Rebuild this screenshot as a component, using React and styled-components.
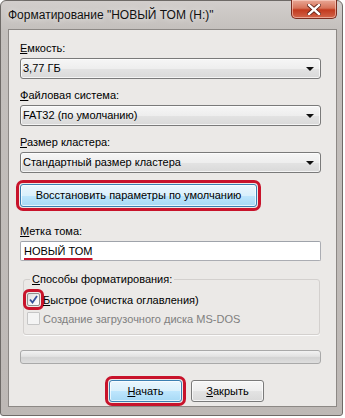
import React from "react";
import styled, { createGlobalStyle, css } from "styled-components";

const GlobalStyle = createGlobalStyle`
  html, body {
    margin: 0;
    padding: 0;
    background: #ffffff;
  }
  body {
    font-family: "Liberation Sans", Arial, sans-serif;
    font-size: 11px;
    color: #000;
  }
`;

const RED = "#c8132b";

const Window = styled.div`
  width: 343px;
  height: 416px;
  box-sizing: border-box;
  display: flex;
  flex-direction: column;
  padding: 0 5px 8px 7px;
  border: 1px solid #6e6a67;
  border-radius: 6px 6px 3px 3px;
  background: linear-gradient(180deg, #d2cecc 0px, #c3bfbc 30px, #bdb8b5 100%);
`;

const TitleBar = styled.div`
  height: 28px;
  display: flex;
  justify-content: space-between;
  align-items: flex-start;
`;

const Title = styled.div`
  padding-top: 6px;
  font-size: 12px;
  line-height: 17px;
  color: #111;
  white-space: nowrap;
  text-shadow: 0 0 6px rgba(255, 255, 255, 0.8);
`;

const CloseButton = styled.div`
  width: 46px;
  height: 19px;
  margin-top: -1px;
  box-sizing: border-box;
  border: 1px solid #7b2d20;
  border-top: none;
  border-radius: 0 0 5px 5px;
  background: linear-gradient(180deg, #e9a896 0%, #d7735a 45%, #c23a1e 55%, #d2654a 100%);
  box-shadow: inset 0 0 0 1px rgba(255, 220, 210, 0.55);
  display: flex;
  align-items: center;
  justify-content: center;
`;

const Body = styled.div`
  flex: 1;
  display: flex;
  flex-direction: column;
  border: 1px solid #8c8885;
  background: #ebe9e7;
  padding: 11px 15px 0 11px;
  white-space: nowrap;
`;

const Field = styled.div`
  display: flex;
  flex-direction: column;
  gap: 2px;
  margin-top: ${(p) => p.$mt || 0}px;
`;

const Label = styled.div`
  line-height: 15px;
  height: 15px;
`;

const controlFace = css`
  box-sizing: border-box;
  border: 1px solid #7a7a7a;
  border-radius: 3px;
  background: linear-gradient(180deg, #f6f6f6 0%, #eeeeee 50%, #e3e3e3 51%, #d9d9d9 100%);
  box-shadow: inset 0 0 0 1px rgba(255, 255, 255, 0.7);
`;

const Combo = styled.div`
  ${controlFace};
  height: 21px;
  display: flex;
  align-items: center;
  justify-content: space-between;
  padding: 0 6px 0 2px;
  line-height: 15px;
`;

const Arrow = styled.span`
  width: 0;
  height: 0;
  border-left: 4px solid transparent;
  border-right: 4px solid transparent;
  border-top: 4px solid #111;
`;

const Button = styled.div`
  ${controlFace};
  height: ${(p) => p.$h || 22}px;
  width: ${(p) => (p.$w ? `${p.$w}px` : "auto")};
  display: flex;
  align-items: center;
  justify-content: center;
  line-height: 15px;
  margin-top: ${(p) => p.$mt || 0}px;
  ${(p) =>
    p.$blue &&
    css`
      border-color: #3c7fb1;
      background: linear-gradient(180deg, #eaf6fd 0%, #d9f0fc 50%, #bee6fd 51%, #a7d9f5 100%);
    `}
  ${(p) =>
    p.$marked &&
    css`
      outline: 3px solid ${RED};
      outline-offset: 1px;
    `}
`;

const TextInput = styled.div`
  box-sizing: border-box;
  height: 20px;
  border: 1px solid #abadb3;
  border-top-color: #9fa3aa;
  border-radius: 2px;
  background: #fff;
  padding: 0 3px;
  display: flex;
  align-items: center;
  line-height: 15px;
`;

const MarkedText = styled.span`
  text-decoration: underline;
  text-decoration-color: ${RED};
  text-decoration-thickness: 2px;
  text-underline-offset: 3px;
`;

const Group = styled.fieldset`
  margin: ${(p) => p.$mt || 0}px 1px 0 3px;
  padding: 3px 3px 6px 3px;
  border: 1px solid #d3d0ce;
  border-radius: 3px;
  box-shadow: 0 1px 0 #fbfbfb;
`;

const Legend = styled.legend`
  margin-left: 3px;
  padding: 0 2px;
  line-height: 15px;
`;

const CheckRow = styled.div`
  height: 19px;
  display: flex;
  align-items: center;
  gap: 3px;
  color: ${(p) => (p.$disabled ? "#808080" : "#000")};
`;

const Box = styled.span`
  width: 13px;
  height: 13px;
  box-sizing: border-box;
  flex: none;
  border: 1px solid ${(p) => (p.$disabled ? "#c6c6c6" : "#8e8f8f")};
  border-radius: 1px;
  background: ${(p) =>
    p.$disabled
      ? "#f4f4f4"
      : "linear-gradient(135deg, #dcdcdc 0%, #f4f4f4 60%, #ffffff 100%)"};
  display: flex;
  align-items: center;
  justify-content: center;
  ${(p) =>
    p.$marked &&
    css`
      outline: 3px solid ${RED};
      outline-offset: 1px;
      border-radius: 2px;
    `}
`;

const Progress = styled.div`
  height: 14px;
  margin: ${(p) => p.$mt || 0}px 0 0 0;
  box-sizing: border-box;
  border: 1px solid #a9a9a9;
  border-radius: 3px;
  background: linear-gradient(180deg, #f2f2f2 0%, #e2e2e2 45%, #d3d3d3 55%, #dedede 100%);
`;

const Actions = styled.div`
  display: flex;
  gap: 9px;
  margin: ${(p) => p.$mt || 0}px 0 0 89px;
`;

const Check = () => (
  <svg width="9" height="9" viewBox="0 0 9 9">
    <path d="M1 4.5 L3.5 7.5 L8 1" fill="none" stroke="#34509a" strokeWidth="1.8" />
  </svg>
);

const CloseGlyph = () => (
  <svg width="14" height="11" viewBox="0 0 14 11">
    <path
      d="M2 1 L12 10 M12 1 L2 10"
      stroke="#5a1c12"
      strokeWidth="4"
      strokeLinecap="square"
    />
    <path
      d="M2 1 L12 10 M12 1 L2 10"
      stroke="#ffffff"
      strokeWidth="2.4"
      strokeLinecap="square"
    />
  </svg>
);

export default function App() {
  return (
    <>
      <GlobalStyle />
      <Window>
        <TitleBar>
          <Title>Форматирование "НОВЫЙ ТОМ (H:)"</Title>
          <CloseButton>
            <CloseGlyph />
          </CloseButton>
        </TitleBar>
        <Body>
          <Field>
            <Label>
              <u>Е</u>мкость:
            </Label>
            <Combo>
              3,77 ГБ
              <Arrow />
            </Combo>
          </Field>
          <Field $mt={9}>
            <Label>
              <u>Ф</u>айловая система:
            </Label>
            <Combo>
              FAT32 (по умолчанию)
              <Arrow />
            </Combo>
          </Field>
          <Field $mt={9}>
            <Label>
              <u>Р</u>азмер кластера:
            </Label>
            <Combo>
              Стандартный размер кластера
              <Arrow />
            </Combo>
          </Field>
          <Button $blue $marked $w={237} $h={23} $mt={11}>
            Восстановить параметры по умолчанию
          </Button>
          <Field $mt={17}>
            <Label>
              <u>М</u>етка тома:
            </Label>
            <TextInput>
              <MarkedText>НОВЫЙ ТОМ</MarkedText>
            </TextInput>
          </Field>
          <Group $mt={11}>
            <Legend>
              <u>С</u>пособы форматирования:
            </Legend>
            <CheckRow>
              <Box $marked>
                <Check />
              </Box>
              <span>
                <u>Б</u>ыстрое (очистка оглавления)
              </span>
            </CheckRow>
            <CheckRow $disabled>
              <Box $disabled />
              <span>Создание загрузочного диска MS-DOS</span>
            </CheckRow>
          </Group>
          <Progress $mt={15} />
          <Actions $mt={16}>
            <Button $blue $marked $w={73}>
              <span>
                <u>Н</u>ачать
              </span>
            </Button>
            <Button $w={73}>
              <span>
                <u>З</u>акрыть
              </span>
            </Button>
          </Actions>
        </Body>
      </Window>
    </>
  );
}
